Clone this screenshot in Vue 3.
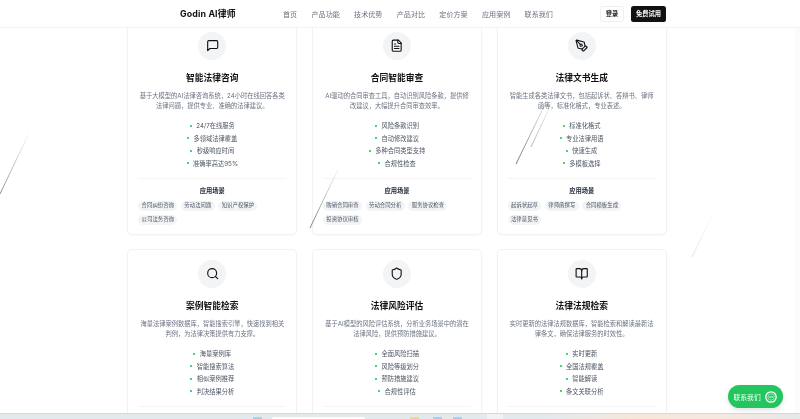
<script setup>
const nav = ['首页', '产品功能', '技术优势', '产品对比', '定价方案', '应用案例', '联系我们']

const icons = {
  message: ['M21 15a2 2 0 0 1-2 2H7l-4 4V5a2 2 0 0 1 2-2h14a2 2 0 0 1 2 2z'],
  file: ['M15 2H6a2 2 0 0 0-2 2v16a2 2 0 0 0 2 2h12a2 2 0 0 0 2-2V7Z', 'M14 2v4a2 2 0 0 0 2 2h4', 'M10 9H8', 'M16 13H8', 'M16 17H8'],
  pen: ['M15.707 21.293a1 1 0 0 1-1.414 0l-1.586-1.586a1 1 0 0 1 0-1.414l5.586-5.586a1 1 0 0 1 1.414 0l1.586 1.586a1 1 0 0 1 0 1.414z', 'm18 13-1.375-6.874a1 1 0 0 0-.746-.776L3.235 2.028a1 1 0 0 0-1.207 1.207L5.35 15.879a1 1 0 0 0 .776.746L13 18', 'm2.3 2.3 7.286 7.286', 'M13 11a2 2 0 1 1-4 0 2 2 0 0 1 4 0'],
  search: ['M21 21l-4.3-4.3', 'M19 11a8 8 0 1 1-16 0 8 8 0 0 1 16 0'],
  shield: ['M20 13c0 5-3.5 7.5-7.66 8.95a1 1 0 0 1-.67-.01C7.5 20.5 4 18 4 13V6a1 1 0 0 1 1-1c2 0 4.5-1.2 6.24-2.72a1.17 1.17 0 0 1 1.52 0C14.51 3.81 17 5 19 5a1 1 0 0 1 1 1z'],
  book: ['M12 7v14', 'M3 18a1 1 0 0 1-1-1V4a1 1 0 0 1 1-1h5a4 4 0 0 1 4 4 4 4 0 0 1 4-4h5a1 1 0 0 1 1 1v13a1 1 0 0 1-1 1h-6a3 3 0 0 0-3 3 3 3 0 0 0-3-3z']
}

const cards = [
  { icon: 'message', title: '智能法律咨询', desc: '基于大模型的AI法律咨询系统，24小时在线回答各类法律问题，提供专业、准确的法律建议。', items: ['24/7在线服务', '多领域法律覆盖', '秒级响应时间', '准确率高达95%'], tags: ['合同纠纷咨询', '劳动法问题', '知识产权保护', '公司法务咨询'] },
  { icon: 'file', title: '合同智能审查', desc: 'AI驱动的合同审查工具，自动识别风险条款，提供修改建议，大幅提升合同审查效率。', items: ['风险条款识别', '自动修改建议', '多种合同类型支持', '合规性检查'], tags: ['购销合同审查', '劳动合同分析', '服务协议检查', '投资协议审核'] },
  { icon: 'pen', title: '法律文书生成', desc: '智能生成各类法律文书，包括起诉状、答辩书、律师函等，标准化格式，专业表述。', items: ['标准化格式', '专业法律用语', '快速生成', '多模板选择'], tags: ['起诉状起草', '律师函撰写', '合同模板生成', '法律意见书'] },
  { icon: 'search', title: '案例智能检索', desc: '海量法律案例数据库，智能搜索引擎，快速找到相关判例，为法律决策提供有力支撑。', items: ['海量案例库', '智能搜索算法', '相似案例推荐', '判决结果分析'], tags: [] },
  { icon: 'shield', title: '法律风险评估', desc: '基于AI模型的风险评估系统，分析业务场景中的潜在法律风险，提供预防措施建议。', items: ['全面风险扫描', '风险等级划分', '预防措施建议', '合规性评估'], tags: [] },
  { icon: 'book', title: '法律法规检索', desc: '实时更新的法律法规数据库，智能检索和解读最新法律条文，确保法律服务的时效性。', items: ['实时更新', '全国法规覆盖', '智能解读', '条文关联分析'], tags: [] }
]

const streaks = [
  { id: 'a', x1: 0, y1: 194, x2: 30, y2: 131, o: 0.65 },
  { id: 'b', x1: 310, y1: 228, x2: 340, y2: 165, o: 0.75 },
  { id: 'c', x1: 516, y1: 164, x2: 552, y2: 90, o: 0.8 },
  { id: 'd', x1: 531, y1: 147, x2: 555, y2: 96, o: 0.45 },
  { id: 'e', x1: 692, y1: 257, x2: 716, y2: 208, o: 0.16 }
]
</script>

<template>
  <div class="page">
    <header class="topbar">
      <span class="logo">Godin AI律师</span>
      <nav class="nav">
        <a v-for="n in nav" :key="n">{{ n }}</a>
      </nav>
      <div class="actions">
        <button class="login">登录</button>
        <button class="trial">免费试用</button>
      </div>
    </header>

    <main class="grid">
      <article v-for="c in cards" :key="c.title" class="card">
        <div class="badge">
          <svg viewBox="0 0 24 24" class="icon" fill="none" stroke="currentColor" stroke-width="2" stroke-linecap="round" stroke-linejoin="round">
            <path v-for="d in icons[c.icon]" :key="d" :d="d" />
          </svg>
        </div>
        <h3>{{ c.title }}</h3>
        <p class="desc">{{ c.desc }}</p>
        <ul>
          <li v-for="i in c.items" :key="i"><i></i>{{ i }}</li>
        </ul>
        <div class="scene">
          <template v-if="c.tags.length">
            <h4>应用场景</h4>
            <div class="tags">
              <span v-for="t in c.tags" :key="t">{{ t }}</span>
            </div>
          </template>
        </div>
      </article>
    </main>

    <svg class="streaks" width="800" height="419">
      <defs>
        <linearGradient v-for="s in streaks" :id="s.id" :key="s.id" gradientUnits="userSpaceOnUse" :x1="s.x1" :y1="s.y1" :x2="s.x2" :y2="s.y2">
          <stop offset="0" stop-color="#555" :stop-opacity="s.o" />
          <stop offset="1" stop-color="#555" stop-opacity="0" />
        </linearGradient>
      </defs>
      <line v-for="s in streaks" :key="s.id" :x1="s.x1" :y1="s.y1" :x2="s.x2" :y2="s.y2" :stroke="`url(#${s.id})`" stroke-width="1" />
    </svg>

    <div class="scrollbar"></div>

    <button class="contact">
      联系我们
      <svg class="ring" viewBox="0 0 12 12" fill="none" stroke="#fff">
        <circle cx="6" cy="6" r="5.2" stroke-width="1.3" />
        <circle cx="6" cy="6" r="3.2" stroke-width="0.5" />
        <path d="M3.8 6h4.4" stroke-width="0.9" />
      </svg>
    </button>

    <footer class="taskbar">
      <span class="tb-dot blue"></span>
      <span class="tb-search"></span>
      <span class="tb-dot yellow"></span>
      <span class="tb-dot blue"></span>
      <span class="tb-dot blue"></span>
      <span class="tb-tile"></span>
    </footer>
  </div>
</template>

<style>
html, body { margin: 0; background: #fff; overflow: hidden; }
</style>

<style scoped>
.page {
  position: relative;
  width: 800px;
  height: 419px;
  overflow: hidden;
  background: #fff;
  font-family: Inter, "Noto Sans CJK SC", sans-serif;
  color: #111;
  filter: blur(0.3px);
}
.topbar {
  position: absolute;
  top: 0;
  left: 0;
  right: 0;
  z-index: 3;
  height: 28px;
  box-sizing: border-box;
  display: flex;
  align-items: center;
  padding-left: 180px;
  background: #fff;
  border-bottom: 1px solid #f1f2f3;
}
.logo {
  width: 103px;
  font-size: 8.8px;
  font-weight: 700;
  letter-spacing: 0.15px;
  color: #111;
  white-space: nowrap;
}
.nav {
  display: flex;
  gap: 14.3px;
  width: 317px;
  font-size: 7.08px;
  color: #6b7280;
}
.actions {
  display: flex;
  gap: 7px;
  align-items: center;
}
.actions button {
  height: 16px;
  padding: 0;
  border-radius: 2.5px;
  font-family: inherit;
  font-size: 6.25px;
  font-weight: 600;
}
.login {
  width: 24px;
  background: #fff;
  border: 1px solid #f0f0f0;
  color: #222;
}
.trial {
  width: 35px;
  background: #111;
  border: 0;
  color: #fff;
}
.grid {
  width: 539.4px;
  margin-left: 127.3px;
  padding-top: 21px;
  display: grid;
  grid-template-columns: repeat(3, 170px);
  column-gap: 14.7px;
  row-gap: 14px;
}
.card {
  box-sizing: border-box;
  height: 214px;
  padding: 11px 10px 0;
  border: 1px solid #f1f2f3;
  border-radius: 5px;
  background: #fff;
  box-shadow: 0 1px 2px rgba(0, 0, 0, 0.03);
  display: flex;
  flex-direction: column;
  align-items: center;
}
.badge {
  width: 28px;
  height: 28px;
  flex: none;
  margin-top: -1px;
  border-radius: 50%;
  background: #f3f4f6;
  display: flex;
  align-items: center;
  justify-content: center;
}
.icon {
  width: 13.4px;
  height: 13.4px;
  color: #111;
}
h3 {
  margin: 12px 0 0;
  font-size: 8.75px;
  line-height: 12px;
  font-weight: 700;
  color: #111;
}
.desc {
  margin: 6.8px 0 0;
  width: 147px;
  font-size: 6.25px;
  line-height: 10.4px;
  text-align: center;
  color: #6b7280;
}
ul {
  margin: 8.2px 0 0;
  padding: 0;
  list-style: none;
  width: 100%;
}
li {
  height: 12.4px;
  display: flex;
  align-items: center;
  justify-content: center;
  font-size: 6.25px;
  color: #4b5563;
}
li i {
  width: 2px;
  height: 2px;
  margin-right: 4.4px;
  border-radius: 50%;
  background: #00c950;
}
.scene {
  align-self: stretch;
  margin-top: 9px;
  padding-top: 6.4px;
  border-top: 1px solid #f5f5f6;
}
h4 {
  margin: 0;
  font-size: 6.25px;
  line-height: 10px;
  font-weight: 700;
  text-align: center;
  color: #1f2937;
}
.tags {
  margin-top: 5.6px;
  display: flex;
  flex-wrap: wrap;
  gap: 4.2px 3.8px;
}
.tags span {
  height: 9.8px;
  padding: 0 3.3px;
  border-radius: 5px;
  background: #f3f4f6;
  font-size: 5.4px;
  line-height: 9.8px;
  color: #4b5563;
}
.streaks {
  position: absolute;
  top: 0;
  left: 0;
  z-index: 2;
  pointer-events: none;
}
.scrollbar {
  position: absolute;
  top: 28px;
  right: 0;
  bottom: 0;
  width: 5px;
  z-index: 1;
  background: #fbfbfb;
}
.contact {
  position: absolute;
  right: 17px;
  bottom: 11px;
  z-index: 4;
  width: 55px;
  height: 23px;
  padding: 0 6px 0 5.5px;
  border: 0;
  border-radius: 12px;
  background: #22c55e;
  box-shadow: 0 2px 5px rgba(0, 0, 0, 0.12);
  color: #fff;
  font-family: inherit;
  font-size: 6.8px;
  display: flex;
  align-items: center;
  justify-content: space-between;
  white-space: nowrap;
}
.ring {
  width: 12px;
  height: 12px;
  flex: none;
}
.taskbar {
  position: absolute;
  left: 0;
  right: 0;
  bottom: 0;
  z-index: 3;
  height: 6px;
  box-sizing: border-box;
  border-top: 1px solid #d3dadc;
  background: linear-gradient(90deg, #e3eaed 0, #e3eaed 68%, #f6e7da 80%, #f5e8de 90%, #e4e8ea 100%);
  display: flex;
  align-items: flex-end;
  padding-left: 253px;
  overflow: hidden;
}
.tb-dot {
  width: 9px;
  height: 2px;
  flex: none;
  border-radius: 1px 1px 0 0;
}
.blue { background: #a9cfe6; }
.yellow { background: #ecd698; margin-left: 45px; }
.yellow + .blue { margin-left: 14px; }
.blue + .blue { margin-left: 11px; }
.tb-search {
  width: 93px;
  height: 2px;
  flex: none;
  margin-left: 10px;
  border-radius: 2px 2px 0 0;
  background: #fff;
}
.tb-tile {
  width: 16px;
  height: 5px;
  flex: none;
  margin-left: 25px;
  background: #eff3f4;
}
</style>
